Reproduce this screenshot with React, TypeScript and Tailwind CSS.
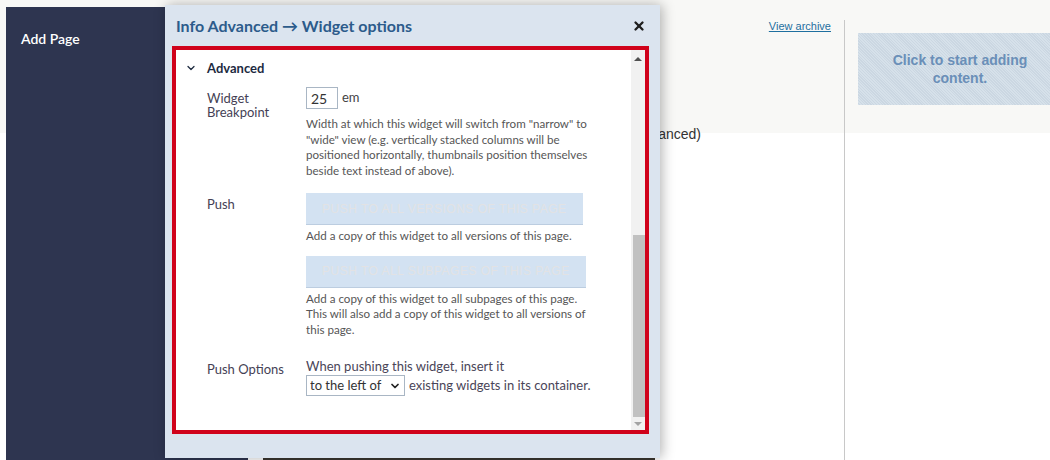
import { ChevronDown, X } from "lucide-react";

const sans = "font-['Lato','Noto_Sans',sans-serif]";
const arial = "font-['Liberation_Sans',Arial,sans-serif]";

function PushButton({ label }: { label: string }) {
  return (
    <button
      type="button"
      disabled
      className={`${arial} h-[32px] self-start border-b border-[#bccde0] bg-[#d3e2f2] px-[16px] text-[12px] tracking-[0.5px] text-[#e2e2e4] uppercase`}
    >
      {label}
    </button>
  );
}

function Row({ label, children }: { label: React.ReactNode; children: React.ReactNode }) {
  return (
    <div className="flex">
      <div className="mt-[4px] w-[99px] shrink-0 text-[13px] leading-[14px] text-[#453f55]">
        {label}
      </div>
      <div className="flex flex-col">{children}</div>
    </div>
  );
}

function Help({ lines }: { lines: string[] }) {
  return (
    <div className="text-[11.6px] leading-[15.5px] text-[#565656]">
      {lines.map((l) => (
        <div key={l} className="whitespace-nowrap">
          {l}
        </div>
      ))}
    </div>
  );
}

function Scrollbar() {
  return (
    <div className="flex w-[14px] shrink-0 flex-col bg-[#f1f1f1]">
      <div className="flex h-[16px] items-center justify-center pt-[1px]">
        <div className="h-0 w-0 border-x-[4px] border-b-[4px] border-x-transparent border-b-[#505050]" />
      </div>
      <div className="flex-1" />
      <div className="ml-[2px] h-[182px] bg-[#c1c1c1]" />
      <div className="flex h-[13px] items-center justify-center">
        <div className="h-0 w-0 border-x-[4px] border-t-[4px] border-x-transparent border-t-[#a3a3a3]" />
      </div>
    </div>
  );
}

function WidgetOptions() {
  return (
    <div
      className={`${sans} absolute top-[5px] left-[165px] flex h-[453px] w-[495px] flex-col bg-[#dbe4ef] shadow-[2px_0_12px_rgba(0,0,0,0.3)]`}
    >
      <div className="flex h-[41px] items-center justify-between pr-[14px] pl-[11px]">
        <h2 className="text-[16px] font-bold text-[#2c5b8b]">
          Info Advanced → Widget options
        </h2>
        <X className="size-[14px] text-[#1e1e1e]" strokeWidth={4} />
      </div>
      <div className="mr-[11px] ml-[7px] flex h-[388px] border-4 border-[#d0021b] bg-white">
        <div className="flex flex-1 flex-col pt-[8px] pl-[9px]">
          <div className="flex items-center text-[13px] leading-[20px] font-bold text-[#1d2a3f]">
            <ChevronDown className="mr-[10px] size-[12px]" strokeWidth={2.5} />
            Advanced
          </div>

          <div className="mt-[9px] flex flex-col pl-[22px]">
            <Row
              label={
                <>
                  Widget
                  <br />
                  Breakpoint
                </>
              }
            >
              <div className="flex items-center">
                <input
                  defaultValue="25"
                  className="h-[22px] w-[32px] border border-[#a9b6c4] px-[4px] text-[14px] text-[#333] outline-none"
                />
                <span className="ml-[4px] text-[13px] text-[#444]">em</span>
              </div>
              <div className="mt-[7px]">
                <Help
                  lines={[
                    'Width at which this widget will switch from "narrow" to',
                    '"wide" view (e.g. vertically stacked columns will be',
                    "positioned horizontally, thumbnails position themselves",
                    "beside text instead of above).",
                  ]}
                />
              </div>
            </Row>

            <div className="mt-[15px]">
              <Row label="Push">
                <PushButton label="Push to all versions of this page" />
                <div className="mt-[3px]">
                  <Help lines={["Add a copy of this widget to all versions of this page."]} />
                </div>
                <div className="mt-[12px]">
                  <PushButton label="Push to all subpages of this page" />
                </div>
                <div className="mt-[3px]">
                  <Help
                    lines={[
                      "Add a copy of this widget to all subpages of this page.",
                      "This will also add a copy of this widget to all versions of",
                      "this page.",
                    ]}
                  />
                </div>
              </Row>
            </div>

            <div className="mt-[21px]">
              <Row label="Push Options">
                <div className="text-[13px] leading-[16px] text-[#4a4558]">
                  When pushing this widget, insert it
                </div>
                <div className="mt-[1px] flex items-center text-[13px] text-[#4a4558]">
                  <div className="relative">
                    <select
                      defaultValue="left"
                      className="h-[21px] w-[99px] appearance-none border border-[#a9b6c4] bg-white pl-[3px] text-[13px] text-[#333] outline-none"
                    >
                      <option value="left">to the left of</option>
                      <option value="right">to the right of</option>
                    </select>
                    <ChevronDown
                      className="pointer-events-none absolute top-[5px] right-[4px] size-[12px] text-[#222]"
                      strokeWidth={3.5}
                    />
                  </div>
                  <span className="ml-[4px]">existing widgets in its container.</span>
                </div>
              </Row>
            </div>
          </div>
        </div>
        <Scrollbar />
      </div>
    </div>
  );
}

export default function App() {
  return (
    <div className="relative flex h-[460px] w-[1050px] overflow-hidden bg-[linear-gradient(to_bottom,#f8f8f6_133px,#ffffff_133px)]">
      <div className="w-[6px] shrink-0" />
      <aside className="mt-[7px] w-[242px] shrink-0 bg-[#2e3550] pt-[19px] pl-[15px]">
        <span className={`${sans} text-[14px] font-semibold text-white`}>Add Page</span>
      </aside>

      <main className="flex flex-1">
        <section className="flex w-[596px] shrink-0 flex-col">
          <div className="flex justify-end pt-[19px] pr-[13px]">
            <a href="#" className={`${arial} text-[11px] leading-[14px] text-[#1f6f9f] underline`}>
              View archive
            </a>
          </div>
          <div className="mt-[93px] ml-[410px] flex w-[43px] justify-end overflow-hidden">
            <span className={`${arial} text-[14px] leading-[16px] whitespace-nowrap text-[#333]`}>
              (Advanced)
            </span>
          </div>
          <div className="mt-auto ml-[15px] h-[2px] w-[392px] bg-[#3b3731]" />
        </section>

        <section className="mt-[20px] flex-1 overflow-hidden border-l border-[#c8c8c8] pt-[13px] pl-[13px]">
          <div
            className={`${arial} flex h-[72px] w-[204px] items-center justify-center bg-[#d3dee8] bg-[repeating-linear-gradient(45deg,#d6e1ea_0px,#d6e1ea_1px,#cbd7e2_1px,#cbd7e2_2px)] text-center text-[14px] leading-[18px] font-bold text-[#6a8fb8]`}
          >
            Click to start adding
            <br />
            content.
          </div>
        </section>
      </main>

      <WidgetOptions />
    </div>
  );
}
